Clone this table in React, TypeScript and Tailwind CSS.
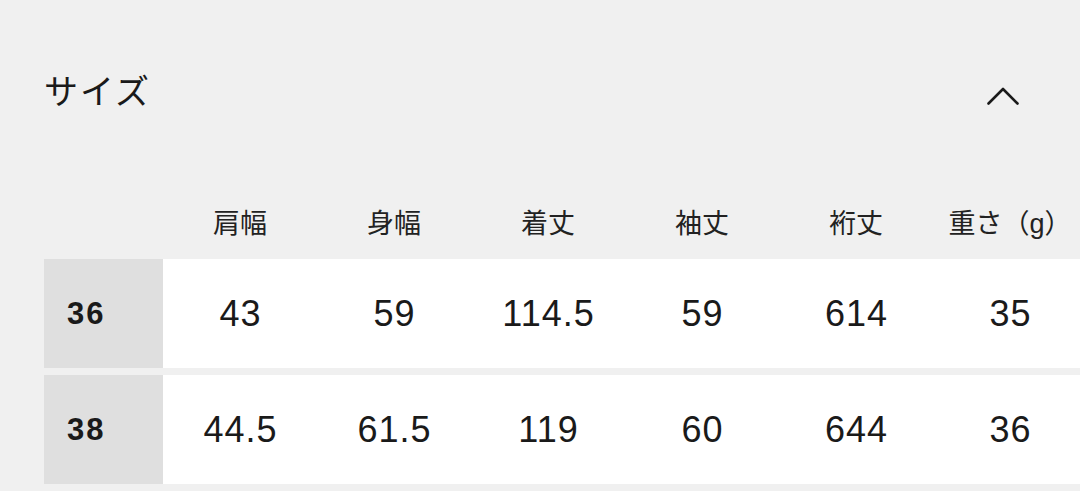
const columns = ['肩幅', '身幅', '着丈', '袖丈', '裄丈', '重さ（g）'];

const rows = [
  { size: '36', values: ['43', '59', '114.5', '59', '614', '35'] },
  { size: '38', values: ['44.5', '61.5', '119', '60', '644', '36'] },
];

export default function App() {
  return (
    <div
      className="w-[1080px] h-[491px] overflow-hidden bg-[#f0f0f0] text-[#1a1a1a]"
      style={{ fontFamily: '"Liberation Sans", "Noto Sans CJK JP", sans-serif' }}
    >
      <div className="h-[190px] pt-[66px] pl-[44px] pr-[61px]">
        <div className="flex h-[52px] items-center justify-between">
          <h2 className="text-[34px] font-normal leading-none tracking-[2px]">サイズ</h2>
          <svg width="32" height="18" viewBox="0 0 32 18" className="mt-[8px]" fill="none">
            <polyline
              points="1.5,16.5 16,2 30.5,16.5"
              stroke="#1a1a1a"
              strokeWidth="2.6"
              strokeLinecap="round"
              strokeLinejoin="round"
            />
          </svg>
        </div>
      </div>

      <div className="pl-[44px] w-[1200px]">
        <div className="grid grid-cols-[119px_repeat(6,154px)] h-[69px] items-center">
          <div />
          {columns.map((c) => (
            <div key={c} className="text-center text-[27px] leading-none text-[#222]">
              {c}
            </div>
          ))}
        </div>

        <div className="flex flex-col gap-[7px]">
          {rows.map((r) => (
            <div key={r.size} className="grid grid-cols-[119px_repeat(6,154px)] h-[109px] bg-white">
              <div className="flex items-center bg-[#dfdfdf] pl-[23px] text-[31px] font-bold leading-none tracking-[2px]">
                {r.size}
              </div>
              {r.values.map((v, i) => (
                <div key={i} className="flex items-center justify-center pl-[1px] text-[36px] leading-none tracking-[1px]">
                  {v}
                </div>
              ))}
            </div>
          ))}
        </div>
      </div>
    </div>
  );
}
